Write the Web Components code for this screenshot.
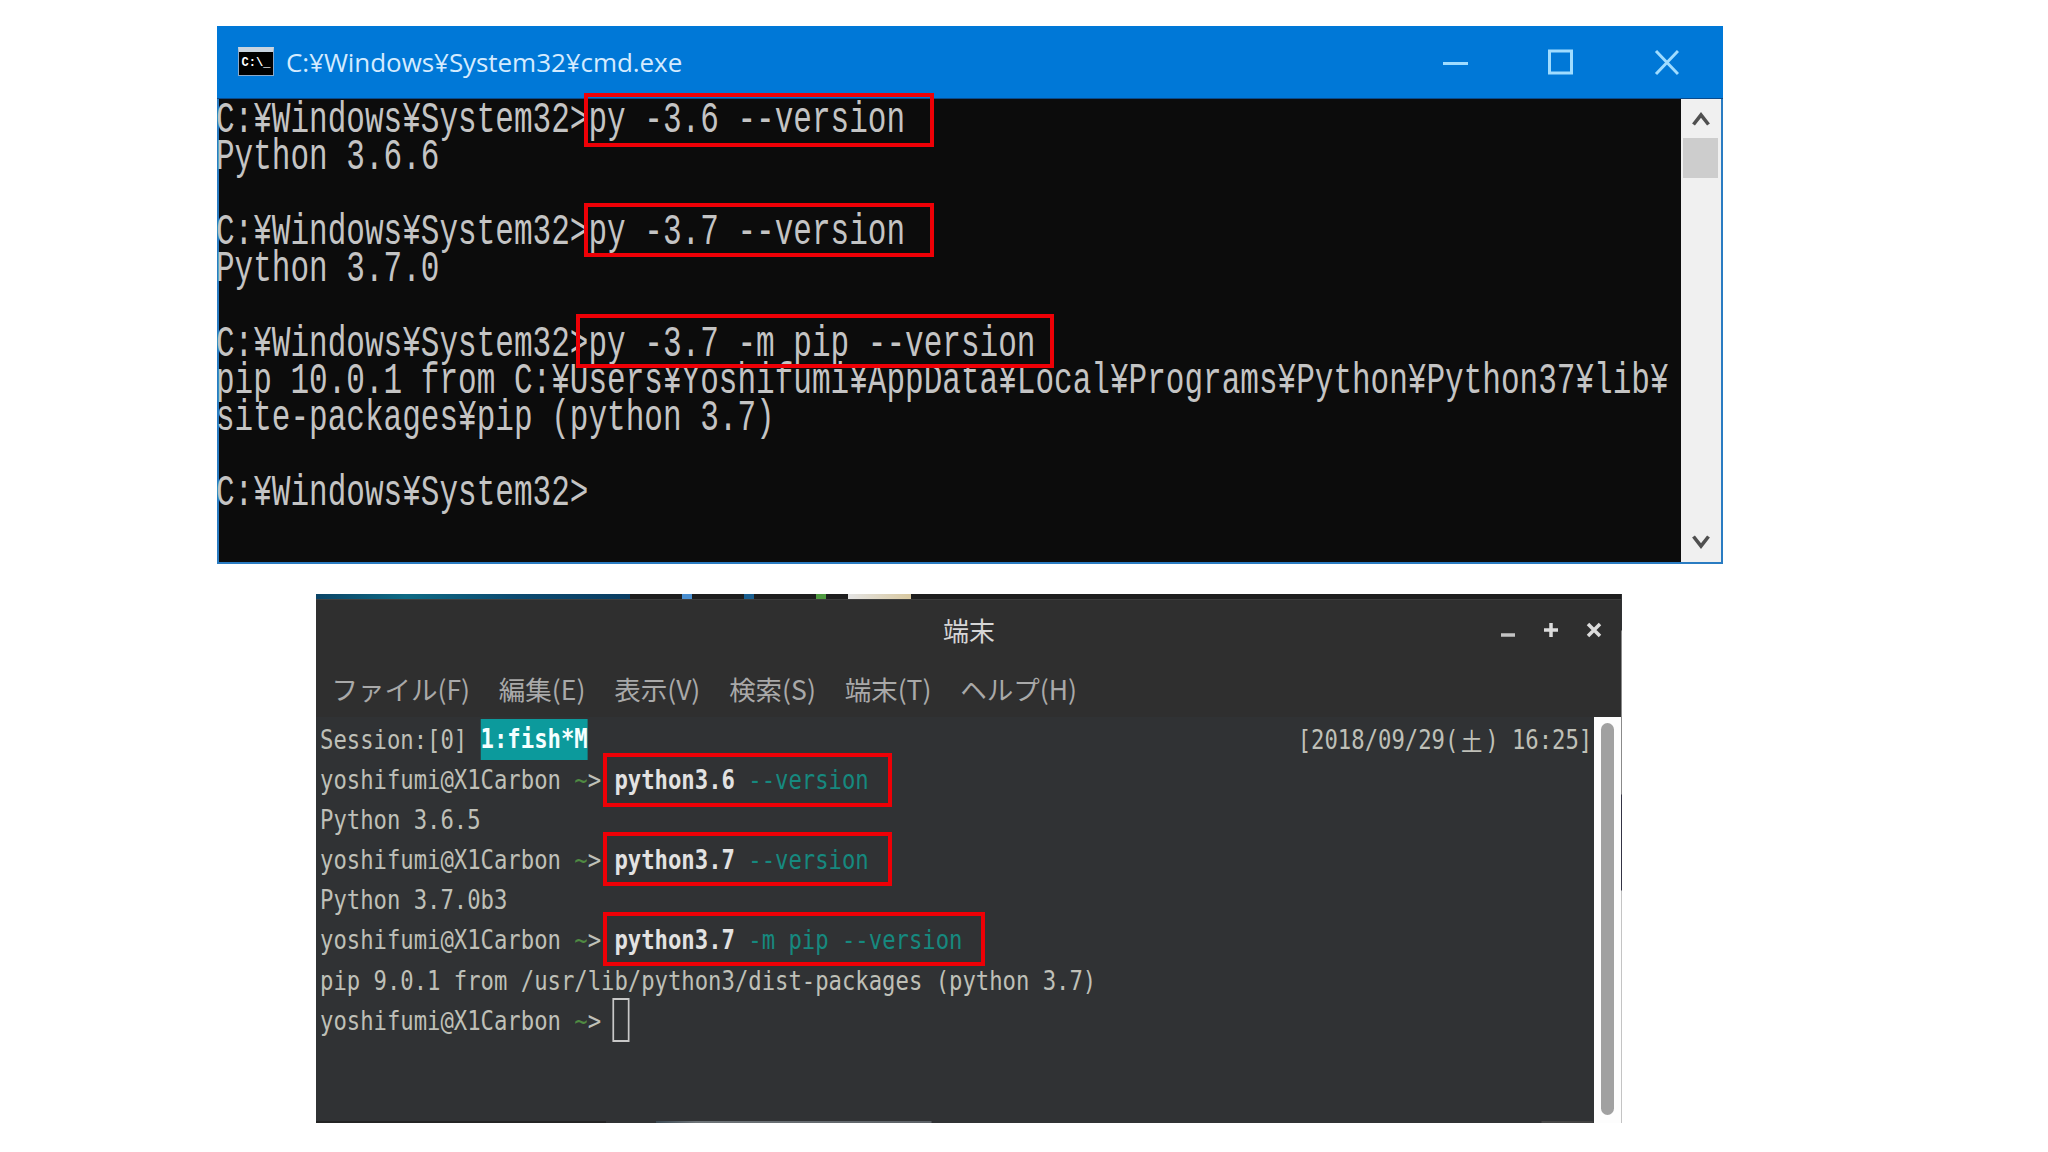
<!DOCTYPE html>
<html lang="ja">
<head>
<meta charset="utf-8">
<title>cmd and terminal</title>
<style>
html,body{margin:0;background:#fff}
</style>
</head>
<body>
<shot-page>
  <cmd-window heading="C:¥Windows¥System32¥cmd.exe">
    <cmd-line>C:¥Windows¥System32&gt;py -3.6 --version</cmd-line>
    <cmd-line>Python 3.6.6</cmd-line>
    <cmd-line></cmd-line>
    <cmd-line>C:¥Windows¥System32&gt;py -3.7 --version</cmd-line>
    <cmd-line>Python 3.7.0</cmd-line>
    <cmd-line></cmd-line>
    <cmd-line>C:¥Windows¥System32&gt;py -3.7 -m pip --version</cmd-line>
    <cmd-line>pip 10.0.1 from C:¥Users¥Yoshifumi¥AppData¥Local¥Programs¥Python¥Python37¥lib¥</cmd-line>
    <cmd-line>site-packages¥pip (python 3.7)</cmd-line>
    <cmd-line></cmd-line>
    <cmd-line>C:¥Windows¥System32&gt;</cmd-line>
    <red-box slot="over" style="left:367px;top:67px;width:350px;height:54px"></red-box>
    <red-box slot="over" style="left:367px;top:177px;width:350px;height:54px"></red-box>
    <red-box slot="over" style="left:359px;top:288px;width:478px;height:54px"></red-box>
  </cmd-window>

  <term-window heading="端末">
    <menu-item>ファイル(F)</menu-item><menu-item>編集(E)</menu-item><menu-item>表示(V)</menu-item><menu-item>検索(S)</menu-item><menu-item>端末(T)</menu-item><menu-item>ヘルプ(H)</menu-item>
    <term-line slot="line">Session:[0] <term-run tone="badge">1:fish*M</term-run><term-run slot="right">[2018/09/29(<term-run tone="wide">土</term-run>) 16:25]</term-run></term-line>
    <term-line slot="line">yoshifumi@X1Carbon <term-run tone="tilde">~</term-run><term-run>&gt;</term-run> <term-run tone="cmd">python3.6</term-run> <term-run tone="arg">--version</term-run></term-line>
    <term-line slot="line">Python 3.6.5</term-line>
    <term-line slot="line">yoshifumi@X1Carbon <term-run tone="tilde">~</term-run><term-run>&gt;</term-run> <term-run tone="cmd">python3.7</term-run> <term-run tone="arg">--version</term-run></term-line>
    <term-line slot="line">Python 3.7.0b3</term-line>
    <term-line slot="line">yoshifumi@X1Carbon <term-run tone="tilde">~</term-run><term-run>&gt;</term-run> <term-run tone="cmd">python3.7</term-run> <term-run tone="arg">-m pip --version</term-run></term-line>
    <term-line slot="line">pip 9.0.1 from /usr/lib/python3/dist-packages (python 3.7)</term-line>
    <term-line slot="line">yoshifumi@X1Carbon <term-run tone="tilde">~</term-run><term-run>&gt;</term-run> <term-run tone="cursor"></term-run></term-line>
    <red-box slot="over" style="left:287px;top:159px;width:289px;height:54px"></red-box>
    <red-box slot="over" style="left:287px;top:238px;width:289px;height:54px"></red-box>
    <red-box slot="over" style="left:287px;top:318px;width:382px;height:54px"></red-box>
  </term-window>
</shot-page>

<script>
function define(name, css, html, extra) {
  customElements.define(name, class extends HTMLElement {
    constructor() {
      super();
      const root = this.attachShadow({mode: 'open'});
      root.innerHTML = '<style>' + css + '</style>' + html;
    }
    connectedCallback() { if (extra) extra(this); }
  });
}

define('shot-page',
  ':host{display:flex;flex-direction:column;align-items:flex-start;gap:30px;padding:26px 0 0 217px;width:1831px;height:1126px;overflow:hidden}' +
  '::slotted(term-window){margin-left:99px}',
  '<slot></slot>');

define('red-box',
  ':host{position:absolute;display:block;box-sizing:border-box;border:4px solid #ee0006;z-index:3}', '');

define('cmd-line',
  ':host{display:block;height:37.3px;line-height:37.3px;white-space:pre;font:44px/37.3px "Liberation Mono",monospace;color:#c4c4c4;' +
  'transform:scaleX(.7053);transform-origin:left center;width:2200px}',
  '<slot></slot>');

define('cmd-window',
  ':host{display:flex;flex-direction:column;position:relative;width:1506px;height:538px;flex:none}' +
  '.bar{display:flex;align-items:center;height:73px;background:#0078d7;padding-left:21px;box-sizing:border-box;flex:none;border-bottom:1px solid #0a4a8a}' +
  '.ico{width:36px;height:29px;background:#000;border:1px solid #8aa8c8;border-top:5px solid #c8d4e0;box-sizing:border-box;color:#fff;font:bold 12px/22px "Liberation Mono",monospace;text-align:center;overflow:hidden;flex:none;margin-top:-2px}' +
  '.ttl{margin-left:12px;font:26px "Open Sans",sans-serif;color:#d4ebff;letter-spacing:-.06px;flex:1}' +
  '.ctl{display:flex;align-items:center;padding-right:44px}' +
  '.ctl svg{display:block}' +
  '.body{flex:1;display:flex;background:#0c0c0c;border:solid #2a7cc2;border-width:0 2px 2px;min-height:0}' +
  '.con{flex:1;padding-top:3px;margin-left:-3px;overflow:hidden;min-width:0}' +
  '.sb{width:40px;background:#f0f0f0;display:flex;flex-direction:column;flex:none}' +
  '.btn{height:40px;display:flex;align-items:center;justify-content:center;flex:none}' +
  '.thumb{height:40px;background:#cdcdcd;margin:-1px 3px 0 2px;flex:none}' +
  '.sp{flex:1}' +
  '.dn{padding-top:2px}',
  '<div class="bar"><div class="ico">C:\\_</div><div class="ttl"></div>' +
  '<div class="ctl"><svg width="236" height="30" viewBox="0 0 236 30" fill="none" stroke="#9fdcff" stroke-width="3">' +
  '<path d="M0 16.5H25"/><rect x="106.5" y="4" width="22" height="22"/><path d="M213 4L235 27M235 4L213 27"/></svg></div></div>' +
  '<div class="body"><div class="con"><slot></slot></div><div class="sb">' +
  '<div class="btn"><svg width="18" height="14" viewBox="0 0 18 14" fill="none" stroke="#505050" stroke-width="3.6"><path d="M1.5 12.5L9 3L16.5 12.5"/></svg></div>' +
  '<div class="thumb"></div><div class="sp"></div>' +
  '<div class="btn dn"><svg width="18" height="14" viewBox="0 0 18 14" fill="none" stroke="#505050" stroke-width="3.6"><path d="M1.5 1.5L9 11L16.5 1.5"/></svg></div>' +
  '</div></div><slot name="over"></slot>',
  h => { h.shadowRoot.querySelector('.ttl').textContent = h.getAttribute('heading'); });

define('menu-item',
  ':host{display:block;font:26.5px "Noto Sans CJK JP","Noto Sans",sans-serif;color:#a9a9a9;line-height:59px;white-space:nowrap}',
  '<slot></slot>');

define('term-run',
  ':host{display:inline}' +
  ':host([tone=badge]){display:inline-block;background:#0c9a9c;color:#f4ffff;font-weight:bold;height:41px;line-height:40px;vertical-align:top;margin-top:-1px}' +
  ':host([tone=tilde]){color:#4f8a42}' +
  ':host([tone=cmd]){color:#e2e2e2;font-weight:bold}' +
  ':host([tone=arg]){color:#16897f}' +
  ':host([tone=wide]){display:inline-block;width:31.4px;text-align:center;font:25px/40px "Noto Sans CJK JP",sans-serif;vertical-align:top}' +
  ':host([tone=cursor]){display:inline-block;box-sizing:border-box;width:20px;height:44px;border:2px solid #c8c8c8;vertical-align:top;margin:-2.5px 0 0 -2px}',
  '<slot></slot>');

define('term-line',
  ':host{display:flex;justify-content:space-between;align-items:flex-start;height:40.2px;width:1488px;flex:none;white-space:pre;' +
  'font:26px/40.2px "DejaVu Sans Mono",monospace;color:#bfc0b8;transform:scaleX(.855);transform-origin:left center}' +
  '.l{white-space:pre}',
  '<div class="l"><slot></slot></div><slot name="right"></slot>');

define('term-window',
  ':host{display:flex;flex-direction:column;position:relative;width:1306px;height:529px;background:#303234;flex:none;overflow:hidden}' +
  '.strip{height:6px;flex:none;box-sizing:border-box;border-bottom:1px solid #3e3e3e;background:' +
  'linear-gradient(90deg,transparent 0,transparent 366px,#4a8fd0 366px,#4a8fd0 376px,transparent 376px,transparent 428px,#1a5f90 428px,#1a5f90 438px,transparent 438px,transparent 500px,#4f9a40 500px,#4f9a40 510px,transparent 510px,transparent 532px,#e4e4e4 532px,#d8c8a0 595px,transparent 595px),' +
  'linear-gradient(90deg,#0b4466 0,#0e6a84 90px,#0c4a70 200px,#0a3d62 314px,#1e1e1e 314px,#1e1e1e 100%)}' +
  '.head{height:59px;display:grid;grid-template-columns:1fr auto 1fr;align-items:center;background:#2f2f2f;flex:none}' +
  '.ttl{grid-column:2;font:26px "Noto Sans CJK JP",sans-serif;color:#d6d6d6}' +
  '.ctl{grid-column:3;justify-self:end;padding-right:16px;display:flex;gap:19px}' +
  '.ctl svg{display:block}' +
  '.menu{height:58px;display:flex;gap:28.8px;padding-left:15.5px;background:#2f2f2f;flex:none}' +
  '.main{flex:1;display:flex;min-height:0}' +
  '.lines{flex:1;padding:2.5px 0 0 4px;display:flex;flex-direction:column;min-width:0}' +
  '.foot{margin:auto 0 0 -4px;height:2px;flex:none;background:linear-gradient(90deg,#242424 0,#242424 290px,#303234 290px,#303234 340px,#3c4a54 340px,#6e7478 380px,#5c6166 615px,#303234 616px,#303234 1225px,#484848 1226px,#404040 1276px,#303234 1278px)}' +
  '.sb{width:27px;background:#fdfdfd;flex:none;padding:6px 7px 8px 7px;box-sizing:border-box;margin-right:1px}' +
  '.th{height:100%;background:#a1a1a1;border-radius:7px}' +
  '.edge{position:absolute;right:0;top:0;bottom:0;width:1px;background:linear-gradient(180deg,#303234 0,#303234 36px,#8a8a8a 37px,#8a8a8a 200px,#334 201px,#334 296px,#c4c4c4 297px)}',
  '<div class="strip"></div><div class="head"><div class="ttl"></div><div class="ctl">' +
  '<svg width="24" height="24" viewBox="0 0 24 24" fill="none" stroke="#c4c4c4" stroke-width="3.5"><path d="M5 17H19"/></svg>' +
  '<svg width="24" height="24" viewBox="0 0 24 24" fill="none" stroke="#dcdcdc" stroke-width="3.5"><path d="M5 12H19M12 5V19"/></svg>' +
  '<svg width="24" height="24" viewBox="0 0 24 24" fill="none" stroke="#dcdcdc" stroke-width="3.5"><path d="M6 6L18 18M18 6L6 18"/></svg>' +
  '</div></div><div class="menu"><slot></slot></div>' +
  '<div class="main"><div class="lines"><slot name="line"></slot><div class="foot"></div></div><div class="sb"><div class="th"></div></div></div>' +
  '<div class="edge"></div><slot name="over"></slot>',
  h => { h.shadowRoot.querySelector('.ttl').textContent = h.getAttribute('heading'); });
</script>
</body>
</html>
